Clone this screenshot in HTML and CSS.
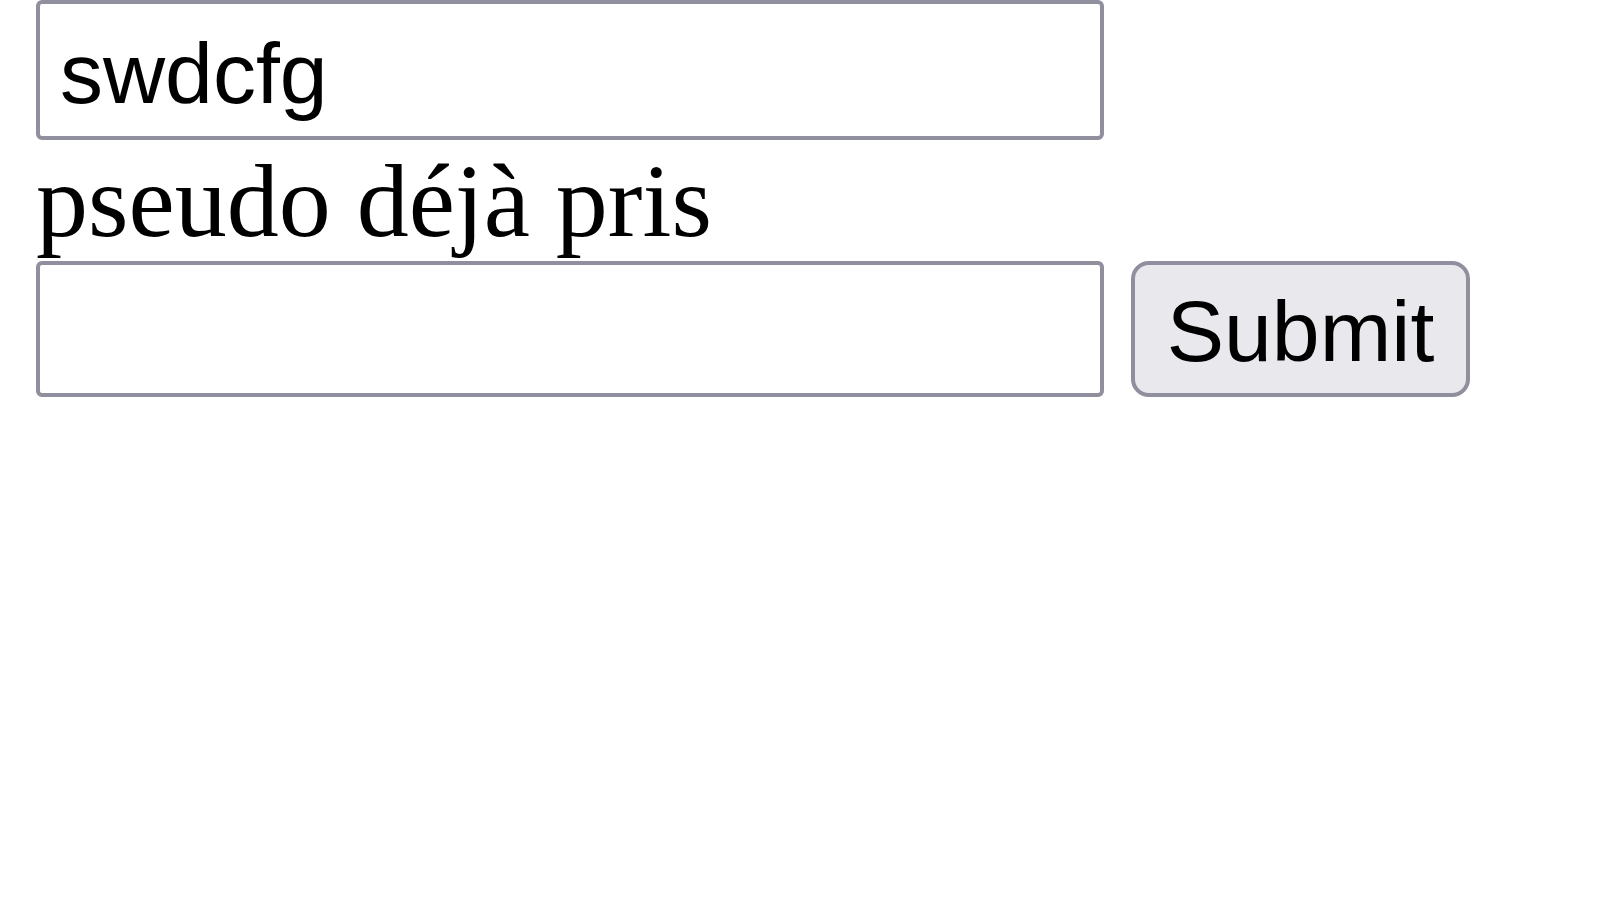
FILE: index.html
```html
<!DOCTYPE html>
<html lang="fr">
<head>
<meta charset="utf-8">
<title>Pseudo</title>
<link rel="stylesheet" href="styles.css">
</head>
<body>
<form class="form">
  <input class="field field-top" type="text" value="swdcfg">
  <div class="message">pseudo déjà pris</div>
  <div class="row">
    <input class="field field-bottom" type="text" value="">
    <button class="submit" type="button">Submit</button>
  </div>
</form>
</body>
</html>
```

FILE: styles.css
```css
html, body {
  margin: 0;
  padding: 0;
  background: #ffffff;
}

.form {
  display: flex;
  flex-direction: column;
  align-items: flex-start;
  padding-left: 36px;
}

.field {
  box-sizing: border-box;
  width: 1068px;
  margin: 0;
  border: 4px solid #8f8f9d;
  border-radius: 6px;
  background: #ffffff;
  font-family: "Liberation Sans", Arial, sans-serif;
  font-size: 86px;
  color: #000000;
  padding: 0 0 0 20px;
  outline: none;
}

.field-top {
  height: 140px;
  padding-top: 6px;
}

.field-bottom {
  height: 136px;
}

.message {
  font-family: "Liberation Serif", "Times New Roman", serif;
  font-size: 104px;
  line-height: 121px;
  height: 121px;
  color: #000000;
  white-space: nowrap;
}

.row {
  display: flex;
  align-items: flex-start;
  gap: 27px;
}

.submit {
  box-sizing: border-box;
  width: 339px;
  height: 136px;
  margin: 0;
  border: 4px solid #8f8f9d;
  border-radius: 18px;
  background: #e9e9ed;
  font-family: "Liberation Sans", Arial, sans-serif;
  font-size: 86px;
  color: #000000;
  padding: 4px 0 0 0;
  text-align: center;
  line-height: 1;
}
```
